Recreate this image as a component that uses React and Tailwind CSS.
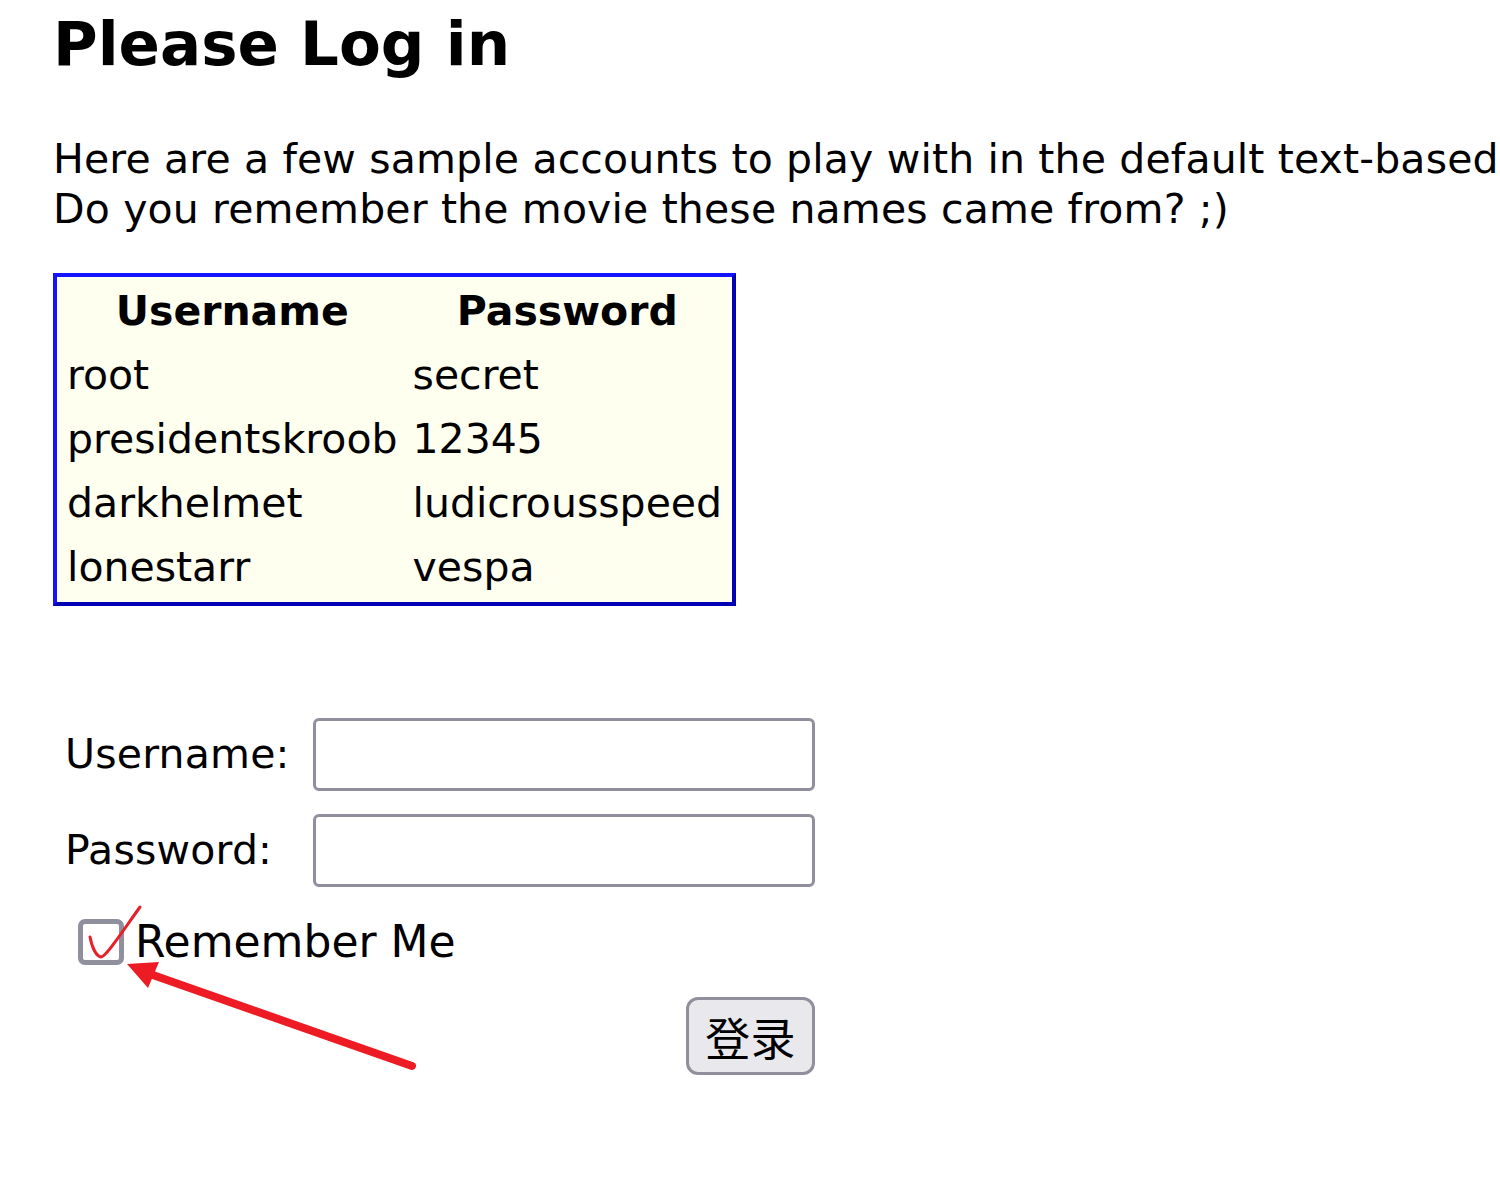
import React from 'react';

const accounts = [
  { user: 'root', pass: 'secret' },
  { user: 'presidentskroob', pass: '12345' },
  { user: 'darkhelmet', pass: 'ludicrousspeed' },
  { user: 'lonestarr', pass: 'vespa' },
];

const font = { fontFamily: '"DejaVu Sans", Verdana, sans-serif' };

export default function App() {
  return (
    <div
      className="relative w-[1500px] h-[1199px] overflow-hidden bg-white text-black"
      style={font}
    >
      <div className="pl-[53px] pt-[6px]">
        <h1 className="text-[61px] font-bold leading-[76px]">Please Log in</h1>

        <p className="mt-[52px] text-[41px] leading-[50px] tracking-[0.15px] whitespace-nowrap">
          Here are a few sample accounts to play with in the default text-based
          <br />
          Do you remember the movie these names came from? ;)
        </p>

        {/* sample accounts */}
        <table className="mt-[39px] border-separate border-spacing-[5px] bg-[#fffff0] border-4 border-t-[#1414ff] border-l-[#1414ff] border-b-[#0000b4] border-r-[#0000b4] text-[41px] leading-[49px]">
          <thead>
            <tr>
              <th className="p-[5px] font-bold text-center">Username</th>
              <th className="p-[5px] font-bold text-center">Password</th>
            </tr>
          </thead>
          <tbody>
            {accounts.map((a) => (
              <tr key={a.user}>
                <td className="p-[5px] text-left">{a.user}</td>
                <td className="p-[5px] text-left">{a.pass}</td>
              </tr>
            ))}
          </tbody>
        </table>

        {/* login form */}
        <form className="mt-[112px] ml-[12px] w-[750px] text-[41px] tracking-[0.2px]">
          <div className="flex flex-col gap-[23px]">
            <div className="flex items-center">
              <label className="w-[248px]">Username:</label>
              <input
                type="text"
                className="w-[502px] h-[73px] rounded-[6px] border-[3px] border-[#8f8f9d] bg-white outline-none"
              />
            </div>
            <div className="flex items-center">
              <label className="w-[248px]">Password:</label>
              <input
                type="password"
                className="w-[502px] h-[73px] rounded-[6px] border-[3px] border-[#8f8f9d] bg-white outline-none"
              />
            </div>
          </div>

          <div className="mt-[31px] ml-[13px] flex items-center gap-[11px]">
            <div className="w-[46px] h-[46px] rounded-[7px] border-[5px] border-[#8f8f9d] bg-white" />
            <span className="text-[44px] leading-[48px] tracking-normal">Remember Me</span>
          </div>

          <div className="mt-[31px] flex justify-end">
            <button
              type="button"
              className="w-[129px] h-[78px] rounded-[12px] border-[3px] border-[#8f8f9d] bg-[#e9e9ed] text-[45px] leading-none"
              style={{ fontFamily: '"Noto Sans CJK SC", sans-serif' }}
            >
              登录
            </button>
          </div>
        </form>
      </div>

      {/* red annotation */}
      <svg
        className="absolute left-0 top-0 pointer-events-none"
        width="1500"
        height="1199"
        viewBox="0 0 1500 1199"
      >
        <path
          d="M90 937 C92 947 96 956 101 957 C106 957 122 932 140 907"
          fill="none"
          stroke="#e8202a"
          strokeWidth="3"
          strokeLinecap="round"
        />
        <line x1="412" y1="1066" x2="150" y2="974" stroke="#ed1c24" strokeWidth="8" strokeLinecap="round" />
        <polygon points="127,964 159,962 148,988" fill="#ed1c24" />
      </svg>
    </div>
  );
}
